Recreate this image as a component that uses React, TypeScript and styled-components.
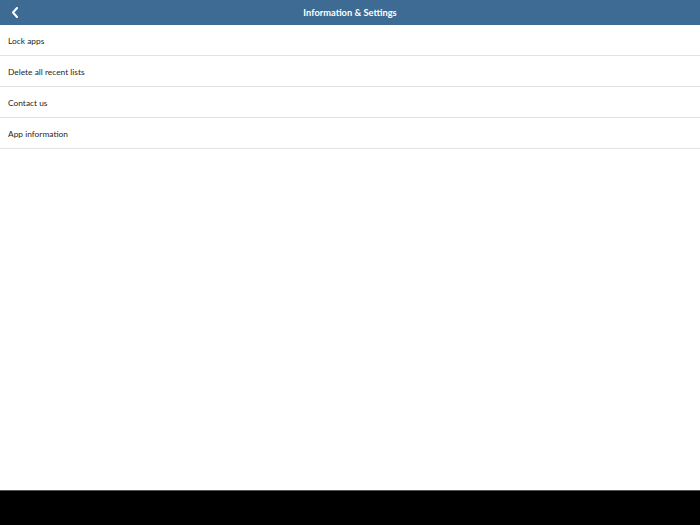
import React from "react";
import styled, { createGlobalStyle } from "styled-components";

const GlobalStyle = createGlobalStyle`
  html, body { margin: 0; padding: 0; height: 100%; }
  body { font-family: Lato, "Noto Sans", sans-serif; background: #fff; }
  #root { height: 100%; }
`;

const Screen = styled.div`
  height: 525px;
  width: 700px;
  display: flex;
  flex-direction: column;
  background: #ffffff;
`;

const Header = styled.header`
  height: 25px;
  flex: none;
  background: #3e6b93;
  display: grid;
  grid-template-columns: 40px 1fr 40px;
  align-items: center;
`;

const BackButton = styled.button`
  border: 0;
  background: transparent;
  padding: 0 0 0 11px;
  height: 25px;
  display: flex;
  align-items: center;
  cursor: pointer;
`;

const Title = styled.h1`
  margin: 0;
  text-align: center;
  color: #ffffff;
  font-size: 9.3px;
  font-weight: 700;
`;

const List = styled.ul`
  list-style: none;
  margin: 0;
  padding: 0;
  flex: 1;
`;

const Row = styled.li`
  box-sizing: border-box;
  height: 31px;
  padding: 2px 0 0 8px;
  border-bottom: 1px solid #e2e2e2;
  display: flex;
  align-items: center;
  font-size: 8.4px;
  color: #1f1f1f;
`;

const BottomBar = styled.div`
  height: 34px;
  flex: none;
  background: #000;
  border-top: 1px solid #555;
`;

const items = ["Lock apps", "Delete all recent lists", "Contact us", "App information"];

export default function App() {
  return (
    <>
      <GlobalStyle />
      <Screen>
        <Header>
          <BackButton aria-label="Back">
            <svg width="8" height="11" viewBox="0 0 8 11">
              <path d="M6 1 L2 5.5 L6 10" fill="none" stroke="#fff" strokeWidth="2" strokeLinecap="round" strokeLinejoin="round" />
            </svg>
          </BackButton>
          <Title>Information &amp; Settings</Title>
          <span />
        </Header>
        <List>
          {items.map((t) => (
            <Row key={t}>{t}</Row>
          ))}
        </List>
        <BottomBar />
      </Screen>
    </>
  );
}
